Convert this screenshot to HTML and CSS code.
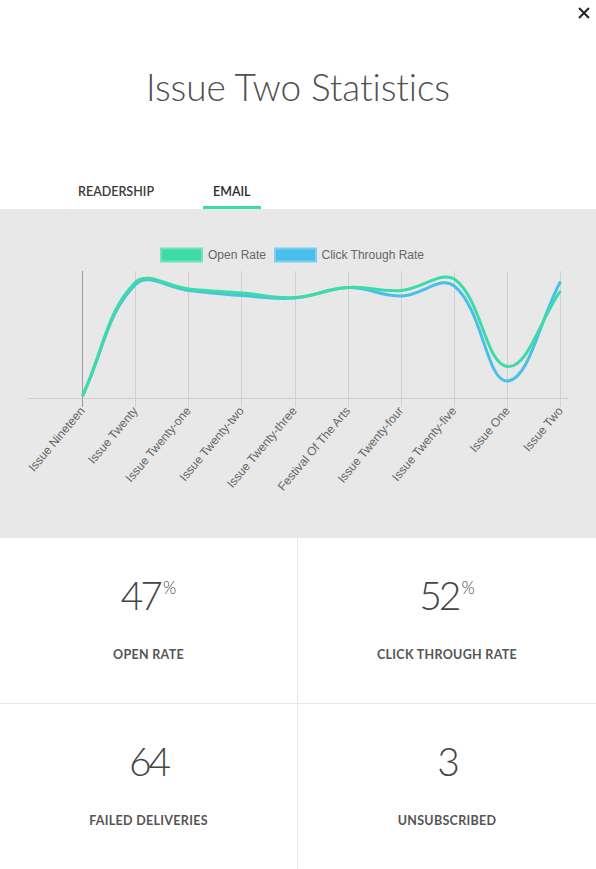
FILE: index.html
```html
<!DOCTYPE html>
<html lang="en">
<head>
<meta charset="utf-8">
<title>Issue Two Statistics</title>
<link rel="stylesheet" href="styles.css">
</head>
<body>
<div class="modal">
  <button class="close" aria-label="Close">
    <svg width="12" height="12" viewBox="0 0 12 12"><path d="M1 1L11 11M11 1L1 11" class="close-x"/></svg>
  </button>
  <h1 class="title">Issue Two Statistics</h1>
  <nav class="tabs">
    <a class="tab">READERSHIP</a>
    <a class="tab active">EMAIL</a>
  </nav>
  <section class="chart">
    <svg class="chart-svg" width="596" height="329" viewBox="0 209 596 329">
      <g class="legend">
        <rect class="legend-box green" x="161" y="248.5" width="41" height="13"/>
        <text class="legend-text" x="208" y="255.5">Open Rate</text>
        <rect class="legend-box blue" x="275" y="248.5" width="41" height="13"/>
        <text class="legend-text" x="321.5" y="255.5">Click Through Rate</text>
      </g>
      <g class="grid">
        <line class="axis-x" x1="28" y1="398.5" x2="568" y2="398.5"/>
        <line class="grid-y first" x1="82.5" y1="271" x2="82.5" y2="407"/>
        <line class="grid-y" x1="135.5" y1="271" x2="135.5" y2="407"/>
        <line class="grid-y" x1="188.5" y1="271" x2="188.5" y2="407"/>
        <line class="grid-y" x1="241.5" y1="271" x2="241.5" y2="407"/>
        <line class="grid-y" x1="295.5" y1="271" x2="295.5" y2="407"/>
        <line class="grid-y" x1="348.5" y1="271" x2="348.5" y2="407"/>
        <line class="grid-y" x1="401.5" y1="271" x2="401.5" y2="407"/>
        <line class="grid-y" x1="454.5" y1="271" x2="454.5" y2="407"/>
        <line class="grid-y" x1="507.5" y1="271" x2="507.5" y2="407"/>
        <line class="grid-y" x1="560.5" y1="271" x2="560.5" y2="407"/>
      </g>
      <path id="line-blue" class="series blue" d=""/>
      <path id="line-green" class="series green" d=""/>
      <g class="xlabels">
        <text x="83" y="409" transform="rotate(-50 83 409)">Issue Nineteen</text>
        <text x="136" y="409" transform="rotate(-50 136 409)">Issue Twenty</text>
        <text x="189" y="409" transform="rotate(-50 189 409)">Issue Twenty-one</text>
        <text x="242" y="409" transform="rotate(-50 242 409)">Issue Twenty-two</text>
        <text x="295" y="409" transform="rotate(-50 295 409)">Issue Twenty-three</text>
        <text x="348.5" y="409" transform="rotate(-50 348.5 409)">Festival Of The Arts</text>
        <text x="401.5" y="409" transform="rotate(-50 401.5 409)">Issue Twenty-four</text>
        <text x="454.5" y="409" transform="rotate(-50 454.5 409)">Issue Twenty-five</text>
        <text x="508" y="409" transform="rotate(-50 508 409)">Issue One</text>
        <text x="561" y="409" transform="rotate(-50 561 409)">Issue Two</text>
      </g>
    </svg>
  </section>
  <section class="stats">
    <div class="stat">
      <div class="num">47<span class="pct">%</span></div>
      <div class="label">OPEN RATE</div>
    </div>
    <div class="stat">
      <div class="num">52<span class="pct">%</span></div>
      <div class="label">CLICK THROUGH RATE</div>
    </div>
    <div class="stat">
      <div class="num">64</div>
      <div class="label">FAILED DELIVERIES</div>
    </div>
    <div class="stat">
      <div class="num">3</div>
      <div class="label">UNSUBSCRIBED</div>
    </div>
  </section>
</div>
<script src="script.js"></script>
</body>
</html>
```

FILE: styles.css
```css
* { box-sizing: border-box; }

html, body {
  margin: 0;
  padding: 0;
  background: #ffffff;
}

body {
  font-family: "Lato", "Open Sans", "Liberation Sans", sans-serif;
  color: #333;
  width: 596px;
  overflow: hidden;
}

.modal {
  position: relative;
  width: 596px;
}

.close {
  position: absolute;
  top: 6px;
  right: 5px;
  width: 14px;
  height: 14px;
  padding: 1px;
  border: 0;
  background: transparent;
  display: flex;
  align-items: center;
  justify-content: center;
}

.close-x {
  stroke: #222;
  stroke-width: 2;
  fill: none;
}

.title {
  margin: 0;
  padding-top: 64px;
  font-family: "Lato", sans-serif;
  font-weight: 300;
  font-size: 37px;
  line-height: 46px;
  text-align: center;
  color: #505050;
  letter-spacing: -0.1px;
}

.tabs {
  display: flex;
  gap: 38px;
  margin-top: 74px;
  padding-left: 67px;
}

.tab {
  display: block;
  padding: 0 11px 6px;
  border-bottom: 3px solid transparent;
  font-family: "Lato", sans-serif;
  font-weight: 600;
  font-size: 12.5px;
  line-height: 16px;
  letter-spacing: 0;
  color: #3a3a3a;
}

.tab.active {
  padding: 0 10px 6px;
  border-bottom-color: #3ddba5;
  color: #2a2a2a;
}

.chart {
  height: 329px;
  background: #e8e8e8;
}

.chart-svg {
  display: block;
}

.legend-box {
  stroke-width: 2;
}
.legend-box.green { fill: #3ddba5; stroke: #6fe4bf; }
.legend-box.blue { fill: #4bbfeb; stroke: #7bd0f0; }

.legend-text,
.xlabels text {
  font-family: "Liberation Sans", Arial, sans-serif;
  font-size: 12px;
  fill: #666;
}

.legend-text {
  dominant-baseline: middle;
}

.xlabels text {
  text-anchor: end;
  dominant-baseline: middle;
}

.axis-x {
  stroke: #cfcfcf;
  stroke-width: 1;
}

.grid-y {
  stroke: #d0d0d0;
  stroke-width: 1;
}

.grid-y.first {
  stroke: #9c9c9c;
}

.series {
  fill: none;
  stroke-width: 3;
}
.series.green { stroke: #3ddba5; }
.series.blue { stroke: #4bbfeb; }

.stats {
  display: grid;
  grid-template-columns: 298px 298px;
}

.stat {
  height: 166px;
  padding-top: 33px;
  text-align: center;
  border-bottom: 1px solid #e6e6e6;
}

.stat:nth-child(odd) {
  border-right: 1px solid #e6e6e6;
}

.num {
  font-family: "Lato", sans-serif;
  font-weight: 300;
  font-size: 39px;
  line-height: 48px;
  letter-spacing: -3px;
  color: #444;
}

.pct {
  font-size: 17px;
  line-height: 1;
  letter-spacing: 0;
  vertical-align: 16px;
  margin-left: 3px;
  color: #444;
}

.label {
  margin-top: 28px;
  font-family: "Lato", sans-serif;
  font-weight: 700;
  font-size: 12.5px;
  line-height: 16px;
  letter-spacing: 0.3px;
  color: #555;
}
```

FILE: script.js
```js
(function () {
  var xs = [];
  for (var i = 0; i < 10; i++) xs.push(82.5 + i * 53.11);
  var green = [396, 282, 289, 293, 297.5, 287.5, 290.5, 279, 366.5, 291];
  var blue = [396, 284.5, 290.5, 295.5, 298, 287.5, 296, 286, 381, 281.5];
  var area = { left: 82.5, right: 560.5, top: 271, bottom: 398 };

  function cap(v, min, max) { return Math.max(Math.min(v, max), min); }

  function build(ys) {
    var pts = ys.map(function (y, i) { return { x: xs[i], y: y }; });
    var n = pts.length;
    pts.forEach(function (p, i) {
      var prev = pts[Math.max(0, i - 1)];
      var next = pts[Math.min(n - 1, i + 1)];
      var d01 = Math.hypot(p.x - prev.x, p.y - prev.y);
      var d12 = Math.hypot(next.x - p.x, next.y - p.y);
      var s01 = d01 / (d01 + d12), s12 = d12 / (d01 + d12);
      if (isNaN(s01)) s01 = 0;
      if (isNaN(s12)) s12 = 0;
      var fa = 0.4 * s01, fb = 0.4 * s12;
      p.cp = {
        x: cap(p.x - fa * (next.x - prev.x), area.left, area.right),
        y: cap(p.y - fa * (next.y - prev.y), area.top, area.bottom)
      };
      p.cn = {
        x: cap(p.x + fb * (next.x - prev.x), area.left, area.right),
        y: cap(p.y + fb * (next.y - prev.y), area.top, area.bottom)
      };
    });
    var f = function (v) { return v.toFixed(2); };
    var d = 'M' + f(pts[0].x) + ' ' + f(pts[0].y);
    for (var j = 1; j < n; j++) {
      d += ' C' + f(pts[j - 1].cn.x) + ' ' + f(pts[j - 1].cn.y) + ' ' +
        f(pts[j].cp.x) + ' ' + f(pts[j].cp.y) + ' ' + f(pts[j].x) + ' ' + f(pts[j].y);
    }
    return d;
  }

  document.getElementById('line-green').setAttribute('d', build(green));
  document.getElementById('line-blue').setAttribute('d', build(blue));
})();
```
